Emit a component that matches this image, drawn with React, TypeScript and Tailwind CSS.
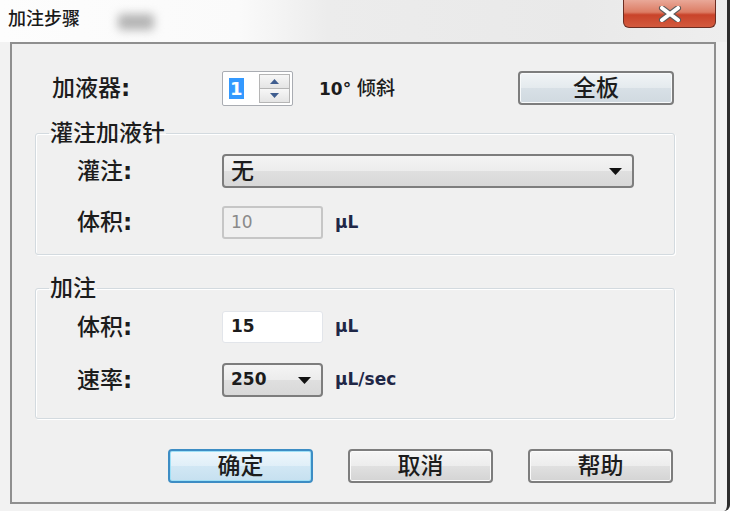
import React from "react";

const font = "font-['DejaVu_Sans','Noto_Sans_CJK_SC',sans-serif]";

const Arrow = () => (
  <svg width="13" height="7" viewBox="0 0 13 7">
    <path d="M0 0 H13 L6.5 7 Z" fill="#111" />
  </svg>
);

const SpinArrow = ({ up }: { up?: boolean }) => (
  <svg width="9" height="5" viewBox="0 0 9 5">
    <path d={up ? "M0 5 H9 L4.5 0 Z" : "M0 0 H9 L4.5 5 Z"} fill="#3f5d8f" />
  </svg>
);

const Field = ({ label, children }: { label: string; children: React.ReactNode }) => (
  <div className="flex items-center">
    <span className="w-[145px] text-[23px] font-medium text-[#1c1c1c] leading-none">
      {label}
      <b className="font-bold">:</b>
    </span>
    {children}
  </div>
);

const Unit = ({ children }: { children: React.ReactNode }) => (
  <span className="ml-[12px] text-[17px] font-bold text-[#1f2747]">{children}</span>
);

const Button = ({ children, primary }: { children: React.ReactNode; primary?: boolean }) => (
  <button
    className={
      primary
        ? "w-[145px] h-[34px] rounded-[4px] border-2 border-[#3d8dc4] bg-[linear-gradient(to_bottom,#eef7fc,#e0eff8_50%,#d1e7f4_51%,#c6e0f0)] shadow-[inset_0_0_0_1px_#9ee0f7] text-[23px] font-medium text-[#1c1c1c] leading-none"
        : "w-[145px] h-[34px] rounded-[4px] border-2 border-[#7d7d7d] bg-[linear-gradient(to_bottom,#f5f5f5,#ededed_50%,#e0e0e0_51%,#d4d4d4)] shadow-[inset_0_0_0_1px_#fbfbfb] text-[23px] font-medium text-[#1c1c1c] leading-none"
    }
  >
    {children}
  </button>
);

export default function App() {
  return (
    <div className={`w-[730px] h-[511px] flex flex-col overflow-hidden bg-[#f2f2f2] border-r-[3px] border-[#2d2d2d] rounded-br-[6px] ${font}`}>
      {/* title bar */}
      <div className="h-[42px] shrink-0 flex items-start bg-[linear-gradient(to_right,#fdfdfd_0%,#fafafa_33%,#ececec_45%,#e9e9e9_80%,#eeeeee_100%)]">
        <span className="ml-[8px] mt-[7px] text-[18px] font-medium text-[#1a1a1a] leading-[24px]">加注步骤</span>
        <div className="ml-[38px] mt-[14px] w-[36px] h-[16px] bg-[#b4b4b4] blur-[5px] rounded" />
        <div className="flex-1" />
        <div className="w-[93px] h-[28px] mr-[11px] rounded-b-[6px] border border-t-0 border-[#6b2d22] bg-[linear-gradient(to_bottom,#e9a898_0%,#dc7c64_45%,#c9432a_55%,#d35a3e_100%)] flex items-center justify-center">
          <svg width="24" height="16" viewBox="0 0 24 16">
            <path d="M4 2 L20 14 M20 2 L4 14" stroke="#5a5a5a" strokeWidth="6" strokeLinecap="round" />
            <path d="M4 2 L20 14 M20 2 L4 14" stroke="#ffffff" strokeWidth="4" strokeLinecap="round" />
          </svg>
        </div>
      </div>

      {/* client area */}
      <div className="ml-[10px] w-[706px] h-[462px] shrink-0 border-2 border-[#8f8f8f] bg-[#f0f0f0] pl-[23px] pt-[26px] flex flex-col">
        {/* dispenser row */}
        <div className="flex items-center h-[36px]">
          <span className="ml-[17px] w-[170px] text-[23px] font-medium text-[#1c1c1c] leading-none">
            加液器<b className="font-bold">:</b>
          </span>
          <div className="w-[71px] h-[35px] flex border border-[#a9acb2] rounded-[2px] bg-white">
            <div className="w-[36px] flex items-center pl-[6px]">
              <span className="bg-[#3399ff] text-white text-[18px] font-bold leading-[21px] px-[1px]">1</span>
            </div>
            <div className="flex-1 flex flex-col my-[2px] mr-[2px] border border-[#b5b5b5]">
              <div className="flex-1 flex items-center justify-center bg-[linear-gradient(to_bottom,#f7f7f7,#e4e4e4)] border-b border-[#b5b5b5]">
                <SpinArrow up />
              </div>
              <div className="flex-1 flex items-center justify-center bg-[linear-gradient(to_bottom,#f7f7f7,#e4e4e4)]">
                <SpinArrow />
              </div>
            </div>
          </div>
          <span className="ml-[26px] text-[17px] font-bold text-[#1c1c1c]">
            10° <span className="text-[19px] font-medium">倾斜</span>
          </span>
          <div className="flex-1" />
          <button className="mr-[40px] w-[156px] h-[34px] rounded-[4px] border-2 border-[#7d7d7d] bg-[linear-gradient(to_bottom,#f1f4f6,#e4eaee_50%,#d8e0e6_51%,#d0d9e0)] shadow-[inset_0_0_0_1px_#f8fafb] text-[23px] font-medium text-[#1c1c1c] leading-none">
            全板
          </button>
        </div>

        {/* prime group */}
        <fieldset className="mt-[15px] w-[640px] border border-[#d3dadf] rounded-[3px] shadow-[inset_1px_1px_0_#ffffff,1px_1px_0_#ffffff] pl-[41px] pt-[9px] pb-[15px] flex flex-col gap-[18px]">
          <legend className="-ml-[28px] px-[1px] text-[23px] font-medium text-[#1c1c1c] leading-[24px]">灌注加液针</legend>
          <Field label="灌注">
            <div className="w-[412px] h-[34px] rounded-[4px] border-2 border-[#7d7d7d] bg-[linear-gradient(to_bottom,#f4f4f4,#ececec_50%,#dfdfdf_51%,#d8d8d8)] flex items-center pl-[7px] pr-[10px]">
              <span className="flex-1 text-[23px] font-medium text-[#1c1c1c] leading-none">无</span>
              <Arrow />
            </div>
          </Field>
          <Field label="体积">
            <div className="w-[101px] h-[33px] rounded-[3px] border-2 border-[#c6c6c6] bg-[#f0f0f0] flex items-center pl-[7px] text-[17px] text-[#8a8a8a]">
              10
            </div>
            <Unit>μL</Unit>
          </Field>
        </fieldset>

        {/* dispense group */}
        <fieldset className="mt-[21px] w-[640px] border border-[#d3dadf] rounded-[3px] shadow-[inset_1px_1px_0_#ffffff,1px_1px_0_#ffffff] pl-[41px] pt-[11px] pb-[21px] flex flex-col gap-[20px]">
          <legend className="-ml-[28px] px-[1px] text-[23px] font-medium text-[#1c1c1c] leading-[24px]">加注</legend>
          <Field label="体积">
            <div className="w-[101px] h-[32px] rounded-[3px] border border-[#e2e5ea] bg-white flex items-center pl-[8px] text-[17px] font-bold text-[#1c1c1c]">
              15
            </div>
            <Unit>μL</Unit>
          </Field>
          <Field label="速率">
            <div className="w-[101px] h-[34px] rounded-[4px] border-2 border-[#7d7d7d] bg-[linear-gradient(to_bottom,#f4f4f4,#ececec_50%,#dfdfdf_51%,#d8d8d8)] flex items-center pl-[7px] pr-[10px]">
              <span className="flex-1 text-[17px] font-bold text-[#1c1c1c]">250</span>
              <Arrow />
            </div>
            <Unit>μL/sec</Unit>
          </Field>
        </fieldset>

        {/* buttons */}
        <div className="mt-[30px] w-[640px] flex justify-end gap-[35px] pr-[2px]">
          <Button primary>确定</Button>
          <Button>取消</Button>
          <Button>帮助</Button>
        </div>
      </div>
    </div>
  );
}
